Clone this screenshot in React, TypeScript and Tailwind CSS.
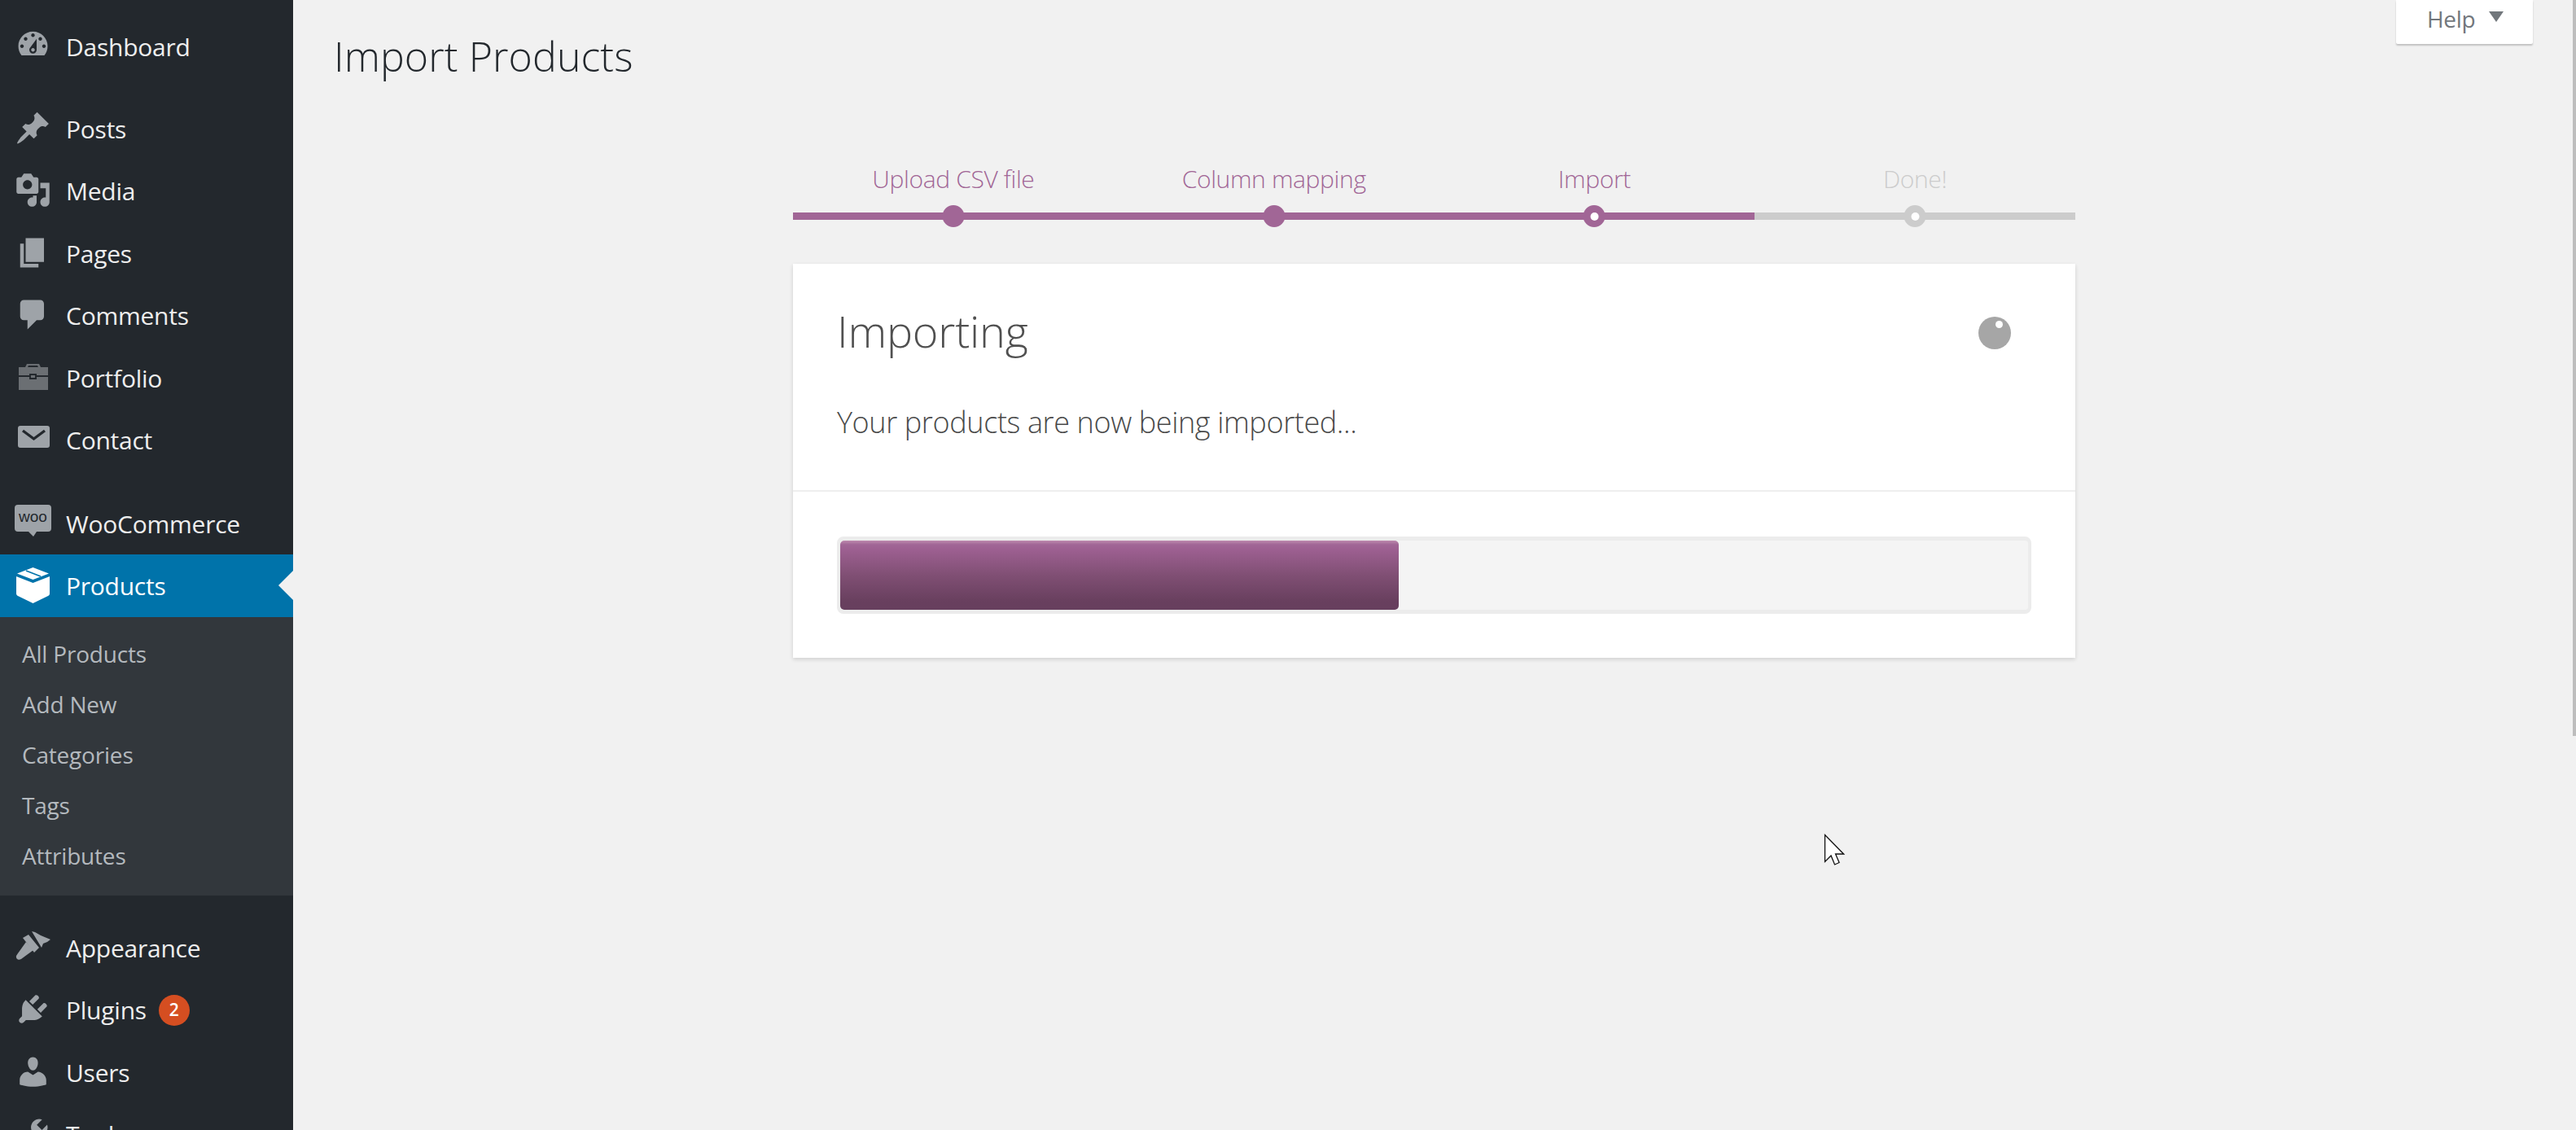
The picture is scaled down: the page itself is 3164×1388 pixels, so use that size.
import type { ReactNode } from "react";

const font = "font-['Open_Sans','Liberation_Sans',sans-serif]";

const Dash = ({ d, className = "" }: { d: string; className?: string }) => (
  <svg viewBox="0 0 20 20" className={`h-[45px] w-[45px] fill-[#9ea3a8] ${className}`}>
    <path fillRule="evenodd" d={d} />
  </svg>
);

const icons: Record<string, ReactNode> = {
  dashboard: (
    <Dash
      className="-mt-[2px]"
      d="M3.76 16h12.48c1.1-1.37 1.76-3.11 1.76-5 0-4.42-3.58-8-8-8s-8 3.58-8 8c0 1.89.66 3.63 1.76 5zM10 4c.55 0 1 .45 1 1s-.45 1-1 1-1-.45-1-1 .45-1 1-1zM6 6c.55 0 1 .45 1 1s-.45 1-1 1-1-.45-1-1 .45-1 1-1zm8 0c.55 0 1 .45 1 1s-.45 1-1 1-1-.45-1-1 .45-1 1-1zm-5.37 5.55L12 7v6c0 1.1-.9 2-2 2s-2-.9-2-2c0-.57.24-1.08.63-1.45zM4 10c.55 0 1 .45 1 1s-.45 1-1 1-1-.45-1-1 .45-1 1-1zm12 0c.55 0 1 .45 1 1s-.45 1-1 1-1-.45-1-1 .45-1 1-1zm-5 3c0-.55-.45-1-1-1s-1 .45-1 1 .45 1 1 1 1-.45 1-1z"
    />
  ),
  posts: (
    <Dash d="M10.44 3.02l1.82-1.82 6.36 6.35-1.83 1.82c-1.05-.68-2.48-.57-3.41.36l-.75.75c-.92.93-1.04 2.35-.35 3.41l-1.83 1.82-2.41-2.41-2.8 2.79c-.42.42-3.38 2.71-3.8 2.29s1.86-3.39 2.28-3.81l2.79-2.79L4.1 9.36l1.83-1.82c1.05.69 2.48.57 3.4-.36l.75-.75c.93-.92 1.05-2.35.36-3.41z" />
  ),
  media: (
    <Dash d="M13 11V4c0-.55-.45-1-1-1h-1.67L9 1H5L3.67 3H2c-.55 0-1 .45-1 1v7c0 .55.45 1 1 1h10c.55 0 1-.45 1-1zM7 4.5c1.38 0 2.5 1.12 2.5 2.5S8.38 9.5 7 9.5 4.5 8.38 4.5 7 5.62 4.5 7 4.5zM14 6h5v10.5c0 1.38-1.12 2.5-2.5 2.5S14 17.88 14 16.5s1.12-2.5 2.5-2.5c.17 0 .34.02.5.05V9h-3V6zm-4 8.05V13h2v3.5c0 1.38-1.12 2.5-2.5 2.5S7 17.88 7 16.5 8.12 14 9.5 14c.17 0 .34.02.5.05z" />
  ),
  pages: <Dash d="M6 15V2h10v13H6zm-1 1h8v2H3V5h2v11z" />,
  comments: (
    <Dash d="M5 2h9c1.1 0 2 .9 2 2v7c0 1.1-.9 2-2 2h-2l-5 5v-5H5c-1.1 0-2-.9-2-2V4c0-1.1.9-2 2-2z" />
  ),
  portfolio: (
    <svg viewBox="0 0 45 45" className="h-[45px] w-[45px] fill-[#6b6f73]">
      <path
        fillRule="evenodd"
        d="M15 6h15l2 4h9v10H27v-2h-9v2H5V10h8l2-4zm2 2l-1 2h13l-1-2H17zM5 22h13v3h9v-3h14v16H5V22zm15-2v3h5v-3h-5z"
      />
    </svg>
  ),
  contact: (
    <svg viewBox="0 0 45 45" className="h-[45px] w-[45px]">
      <rect x="4" y="6" width="39" height="27" rx="3" fill="#9ea3a8" />
      <path d="M10 12l13.5 10L37 12" fill="none" stroke="#23282d" strokeWidth="3.4" />
    </svg>
  ),
  woo: (
    <svg viewBox="0 0 45 45" className="h-[45px] w-[45px]">
      <path
        d="M4 0h37a4 4 0 0 1 4 4v25a4 4 0 0 1-4 4H30l-3 0-4 6-6-6H4a4 4 0 0 1-4-4V4a4 4 0 0 1 4-4z"
        fill="#9ea3a8"
      />
      <text
        x="22.5"
        y="21"
        textAnchor="middle"
        fontSize="19"
        fontFamily="'Liberation Sans', sans-serif"
        fill="#23282d"
      >
        woo
      </text>
    </svg>
  ),
  products: (
    <svg viewBox="0 0 45 45" className="h-[45px] w-[45px] fill-white">
      <path d="M22.5 1L42 8.5 22.5 16 3 8.5z" />
      <path d="M14 5l18 7" fill="none" stroke="#0073aa" strokeWidth="1.6" />
      <path d="M2 12l20.5 8L43 12v21c0 1.5-.8 2.6-2 3l-18.5 9L4 36c-1.2-.5-2-1.6-2-3z" />
    </svg>
  ),
  appearance: (
    <svg viewBox="0 0 45 45" className="h-[45px] w-[45px] fill-[#9ea3a8]">
      <path d="M21 3l4 1 7 4 12 5-4 3-5 2-2 5z" />
      <path d="M10 11l7-4 13 16-6 6z" />
      <path d="M14 16l9 10L8 37c-3 2-7 0-6-4l2-3z" />
    </svg>
  ),
  plugins: (
    <Dash d="M13.11 4.36L9.87 7.6 8 5.73l3.24-3.24c.35-.34 1.05-.2 1.56.32.52.51.66 1.21.31 1.55zm-8 1.77l.91-1.12 9.01 9.01-1.19.84c-.71.71-2.63 1.16-3.82 1.16H6.14L4.9 17.26c-.59.59-1.54.59-2.12 0-.59-.58-.59-1.53 0-2.12l1.24-1.24v-3.88c0-1.13.4-3.19 1.09-3.89zm7.26 3.97l3.24-3.24c.34-.35 1.04-.21 1.55.31.52.51.66 1.21.31 1.55l-3.24 3.25z" />
  ),
  users: (
    <Dash d="M10 9.25c-2.27 0-2.73-3.44-2.73-3.44C7 4.02 7.82 2 9.97 2c2.16 0 2.98 2.02 2.71 3.81 0 0-.41 3.44-2.68 3.44zm0 2.57L12.72 10c2.39 0 4.52 2.33 4.52 4.53v2.49s-3.65 1.13-7.24 1.13c-3.65 0-7.24-1.13-7.24-1.13v-2.49c0-2.25 1.94-4.48 4.47-4.48z" />
  ),
  tools: (
    <Dash d="M16.68 9.77c-1.34 1.34-3.3 1.67-4.95.99l-5.41 6.52c-.99.99-2.59.99-3.58 0s-.99-2.59 0-3.57l6.52-5.42c-.68-1.65-.35-3.61.99-4.95 1.28-1.28 3.12-1.62 4.72-1.06l-2.89 2.89 2.82 2.82 2.86-2.87c.53 1.58.18 3.39-1.08 4.65zM3.81 16.21c.4.39 1.04.39 1.43 0 .4-.4.4-1.04 0-1.43-.39-.4-1.03-.4-1.43 0-.39.39-.39 1.03 0 1.43z" />
  ),
};

const MenuItem = ({
  icon,
  label,
  active,
  badge,
}: {
  icon: string;
  label: string;
  active?: boolean;
  badge?: number;
}) => (
  <div className={`relative flex h-[76.5px] ${active ? "bg-[#0073aa]" : ""}`}>
    <div className="ml-[18px] mt-[15px] h-[45px] w-[45px] shrink-0">{icons[icon]}</div>
    <div
      className={`ml-[18px] mt-[18px] text-[30px] leading-[42px] tracking-[-0.25px] ${
        active ? "text-white" : "text-[#eeeeee]"
      }`}
    >
      {label}
    </div>
    {badge !== undefined && (
      <div className="ml-[15px] mt-[20px] flex h-[38px] w-[38px] items-center justify-center rounded-full bg-[#d54e21] text-[21px] font-semibold text-white">
        {badge}
      </div>
    )}
    {active && (
      <div className="absolute right-0 top-[20px] h-0 w-0 border-y-[18px] border-r-[18px] border-y-transparent border-r-[#f1f1f1]" />
    )}
  </div>
);

const SubItem = ({ label }: { label: string }) => (
  <div className="flex h-[62px] items-center pl-[27px] text-[28px] tracking-[-0.2px] text-[#b4b9be]">{label}</div>
);

const steps = [
  { label: "Upload CSV file", state: "done" },
  { label: "Column mapping", state: "done" },
  { label: "Import", state: "active" },
  { label: "Done!", state: "todo" },
];

const Step = ({ label, state }: { label: string; state: string }) => {
  const todo = state === "todo";
  return (
    <div className="flex-1">
      <div
        className={`h-[41px] text-center text-[30px] font-light leading-[40px] tracking-[-0.35px] ${
          todo ? "text-[#cccccc]" : "text-[#a16696]"
        }`}
      >
        {label}
      </div>
      <div className={`relative mt-[20px] h-[9px] ${todo ? "bg-[#cccccc]" : "bg-[#a16696]"}`}>
        <div
          className={`absolute left-1/2 top-[-9px] flex h-[27px] w-[27px] -translate-x-1/2 items-center justify-center rounded-full ${
            todo ? "bg-[#cccccc]" : "bg-[#a16696]"
          }`}
        >
          {state !== "done" && <div className="h-[10px] w-[10px] rounded-full bg-white" />}
        </div>
      </div>
    </div>
  );
};

export default function App() {
  return (
    <div className={`relative flex h-[1388px] overflow-hidden bg-[#f1f1f1] ${font}`}>
      <aside className="w-[360px] shrink-0 bg-[#23282d] pt-[19px]">
        <MenuItem icon="dashboard" label="Dashboard" />
        <div className="h-[24px]" />
        <MenuItem icon="posts" label="Posts" />
        <MenuItem icon="media" label="Media" />
        <MenuItem icon="pages" label="Pages" />
        <MenuItem icon="comments" label="Comments" />
        <MenuItem icon="portfolio" label="Portfolio" />
        <MenuItem icon="contact" label="Contact" />
        <div className="h-[26px]" />
        <MenuItem icon="woo" label="WooCommerce" />
        <MenuItem icon="products" label="Products" active />
        <div className="bg-[#32373c] pb-[18px] pt-[14px]">
          <SubItem label="All Products" />
          <SubItem label="Add New" />
          <SubItem label="Categories" />
          <SubItem label="Tags" />
          <SubItem label="Attributes" />
        </div>
        <div className="h-[26px]" />
        <MenuItem icon="appearance" label="Appearance" />
        <MenuItem icon="plugins" label="Plugins" badge={2} />
        <MenuItem icon="users" label="Users" />
        <MenuItem icon="tools" label="Tools" />
      </aside>

      <main className="flex-1">
        <h1 className="ml-[50px] mt-[34px] text-[50px] font-light leading-[70px] tracking-[0.1px] text-[#23282d]">
          Import Products
        </h1>

        <div className="ml-[614px] mt-[96px] w-[1575px]">
          <div className="flex">
            {steps.map((s) => (
              <Step key={s.label} label={s.label} state={s.state} />
            ))}
          </div>

          <div className="mt-[54px] bg-white shadow-[0_2px_5px_rgba(0,0,0,0.14)]">
            <div className="h-[280px] border-b-2 border-[#eeeeee] px-[54px]">
              <div className="flex items-center justify-between pt-[44px]">
                <h2 className="text-[54px] font-light leading-[76px] tracking-[-0.2px] text-[#505050]">Importing</h2>
                <div className="relative mr-[25px] mt-[6px] h-[40px] w-[40px] rounded-full bg-[#a6a6a6]">
                  <div className="absolute left-[21px] top-[5px] h-[9px] w-[9px] rounded-full bg-white" />
                </div>
              </div>
              <p className="mt-[51px] text-[36px] font-light leading-[48px] tracking-[-0.38px] text-[#4a4a4a]">
                Your products are now being imported...
              </p>
            </div>
            <div className="px-[54px] pb-[54px] pt-[55px]">
              <div className="h-[95px] rounded-[8px] border-x-4 border-y-[5px] border-[#ececec] bg-[#f4f4f4]">
                <div className="h-full w-[686px] rounded-[5px] bg-[linear-gradient(#bd8aae_0px,#a16696_5px,#9c5f90_12px,#804f74_50%,#683f5e_88%,#673f5e_100%)]" />
              </div>
            </div>
          </div>
        </div>
      </main>

      <div className="absolute left-[2943px] top-0 flex h-[54px] w-[168px] items-center rounded-b-[2px] bg-white pb-[8px] pl-[38px] text-[28px] tracking-[-0.3px] text-[#72777c] shadow-[0_2px_2px_rgba(0,0,0,0.2)]">
        Help
        <div className="mb-[6px] ml-[17px] h-0 w-0 border-x-[9px] border-t-[13px] border-x-transparent border-t-[#72777c]" />
      </div>

      <div className="absolute right-0 top-0 h-[904px] w-[4px] bg-[#bdbdbd]" />

      <svg viewBox="0 0 26 40" className="absolute left-[2240px] top-[1024px] h-[40px] w-[26px]">
        <path
          d="M1.5 1.5v33l7.5-7.5 4.5 11 5.5-2.5-4.5-10.5h10z"
          fill="#fff"
          stroke="#111"
          strokeWidth="1.3"
        />
      </svg>
    </div>
  );
}
